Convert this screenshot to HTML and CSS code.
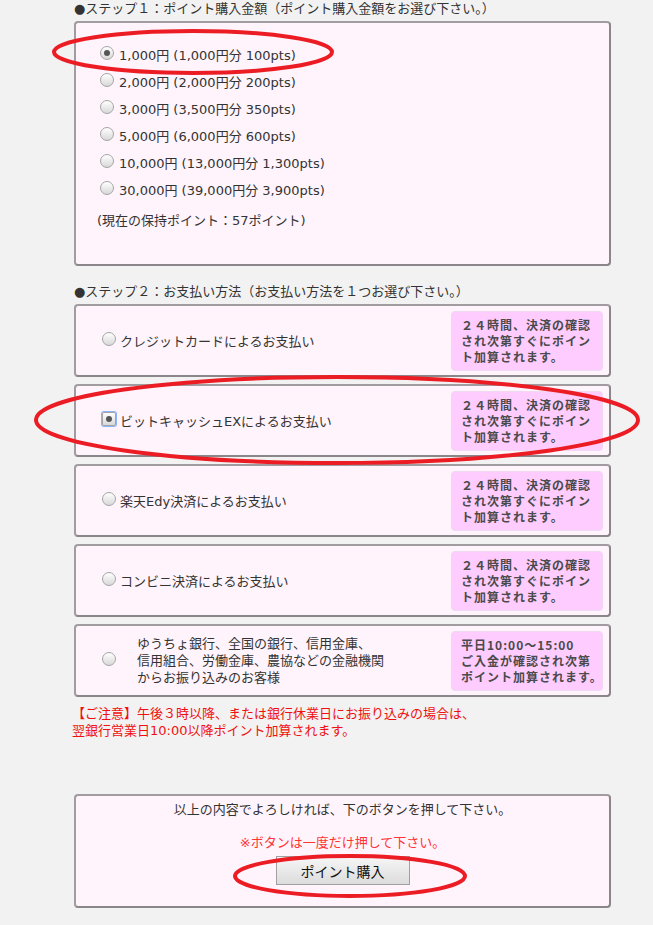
FILE: index.html
```html
<!DOCTYPE html>
<html lang="ja">
<head>
<meta charset="UTF-8">
<title>ポイント購入</title>
<link rel="stylesheet" href="styles.css">
</head>
<body>
<div class="page">
    <p class="step">●ステップ１：ポイント購入金額（ポイント購入金額をお選び下さい。）</p>
    <div class="box amounts">
        <label class="amount"><span class="radio checked"></span>1,000円 (1,000円分 100pts)</label>
        <label class="amount"><span class="radio"></span>2,000円 (2,000円分 200pts)</label>
        <label class="amount"><span class="radio"></span>3,000円 (3,500円分 350pts)</label>
        <label class="amount"><span class="radio"></span>5,000円 (6,000円分 600pts)</label>
        <label class="amount"><span class="radio"></span>10,000円 (13,000円分 1,300pts)</label>
        <label class="amount"><span class="radio"></span>30,000円 (39,000円分 3,900pts)</label>
        <p class="current">(現在の保持ポイント：57ポイント)</p>
    </div>

    <p class="step step2">●ステップ２：お支払い方法（お支払い方法を１つお選び下さい。）</p>
    <div class="methods">
        <div class="box method">
            <span class="radio"></span>
            <span class="method-name">クレジットカードによるお支払い</span>
            <span class="badge">２４時間、決済の確認<br>され次第すぐにポイン<br>ト加算されます。</span>
        </div>
        <div class="box method">
            <span class="radio checked focused"></span>
            <span class="method-name">ビットキャッシュEXによるお支払い</span>
            <span class="badge">２４時間、決済の確認<br>され次第すぐにポイン<br>ト加算されます。</span>
        </div>
        <div class="box method">
            <span class="radio"></span>
            <span class="method-name">楽天Edy決済によるお支払い</span>
            <span class="badge">２４時間、決済の確認<br>され次第すぐにポイン<br>ト加算されます。</span>
        </div>
        <div class="box method">
            <span class="radio"></span>
            <span class="method-name">コンビニ決済によるお支払い</span>
            <span class="badge">２４時間、決済の確認<br>され次第すぐにポイン<br>ト加算されます。</span>
        </div>
        <div class="box method">
            <span class="radio"></span>
            <span class="method-name bank">ゆうちょ銀行、全国の銀行、信用金庫、<br>信用組合、労働金庫、農協などの金融機関<br>からお振り込みのお客様</span>
            <span class="badge">平日10:00～15:00<br>ご入金が確認され次第<br>ポイント加算されます。</span>
        </div>
    </div>
    <p class="notice">【ご注意】午後３時以降、または銀行休業日にお振り込みの場合は、<br>翌銀行営業日10:00以降ポイント加算されます。</p>

    <div class="box confirm">
        <p>以上の内容でよろしければ、下のボタンを押して下さい。</p>
        <p class="once">※ボタンは一度だけ押して下さい。</p>
        <button class="buy">ポイント購入</button>
    </div>
</div>

<!-- red hand-drawn marks over the screenshot -->
<svg class="marks" width="653" height="925" viewBox="0 0 653 925">
    <ellipse cx="193" cy="52" rx="139" ry="21" />
    <ellipse cx="337" cy="420" rx="301" ry="43" />
    <ellipse cx="350" cy="876" rx="115" ry="20" />
</svg>
</body>
</html>
```

FILE: styles.css
```css
body {
    margin: 0;
    background: #f2f2f2;
    font-family: "DejaVu Sans", "Noto Sans CJK JP", sans-serif;
    font-size: 13px;
    color: #333;
    position: relative;
    height: 925px;
    overflow: hidden;
}
p {
    margin: 0;
}
.page {
    width: 537px;
    margin-left: 74px;
}
.step {
    line-height: 18px;
    height: 21px;
}
.step2 {
    margin-top: 17px;
    height: 21px;
}
.box {
    background: #fff4fb;
    border: 2px solid #a09ca0;
    border-right-color: #8a868a;
    border-bottom-color: #8a868a;
    border-radius: 4px;
    box-sizing: border-box;
}
.amounts {
    height: 245px;
    padding: 18px 0 0 24px;
}
.amount {
    display: flex;
    align-items: center;
    height: 27px;
    gap: 5px;
}
.radio {
    width: 12px;
    height: 12px;
    border-radius: 50%;
    border: 1px solid #a5a5a5;
    background: linear-gradient(#ffffff, #d8d8d8);
    flex-shrink: 0;
    position: relative;
    top: -2px;
}
.radio.checked::after {
    content: "";
    position: absolute;
    left: 3px;
    top: 3px;
    width: 6px;
    height: 6px;
    border-radius: 50%;
    background: #555;
}
.radio.focused {
    box-shadow: 0 0 0 1px #8ab4f8;
    border-radius: 2px;
}
.current {
    margin: 9px 0 0 -3px;
    line-height: 18px;
}
.methods {
    display: flex;
    flex-direction: column;
    gap: 7px;
}
.method {
    height: 73px;
    display: flex;
    align-items: center;
    padding: 0 6px 0 26px;
}
.method-name {
    margin-left: 4px;
    flex: 1;
}
.method-name.bank {
    margin-left: 21px;
    line-height: 17px;
}
.badge {
    width: 152px;
    height: 60px;
    box-sizing: border-box;
    background: #ffccff;
    border: 1px solid #f0d8f0;
    border-radius: 4px;
    padding: 5px 0 0 9px;
    font-family: "Noto Sans CJK JP", sans-serif;
    font-size: 12px;
    font-weight: bold;
    line-height: 16px;
    letter-spacing: 1px;
    color: #4a4a4a;
    white-space: nowrap;
    overflow: hidden;
}
.notice {
    color: #f01010;
    line-height: 17px;
    margin: 8px 0 0 -2px;
}
.confirm {
    margin-top: 55px;
    height: 114px;
    text-align: center;
    padding-top: 5px;
}
.confirm p {
    line-height: 18px;
}
.confirm .once {
    color: #ff3333;
    margin-top: 15px;
}
.buy {
    margin-top: 4px;
    width: 134px;
    height: 29px;
    font-family: "Noto Sans CJK JP", sans-serif;
    font-size: 14px;
    color: #111;
    background: linear-gradient(#f6f6f6, #dcdcdc);
    border: 1px solid #a0a0a0;
}
.marks {
    position: absolute;
    left: 0;
    top: 0;
    pointer-events: none;
}
.marks ellipse {
    fill: none;
    stroke: #ec1c24;
    stroke-width: 4;
}
```
